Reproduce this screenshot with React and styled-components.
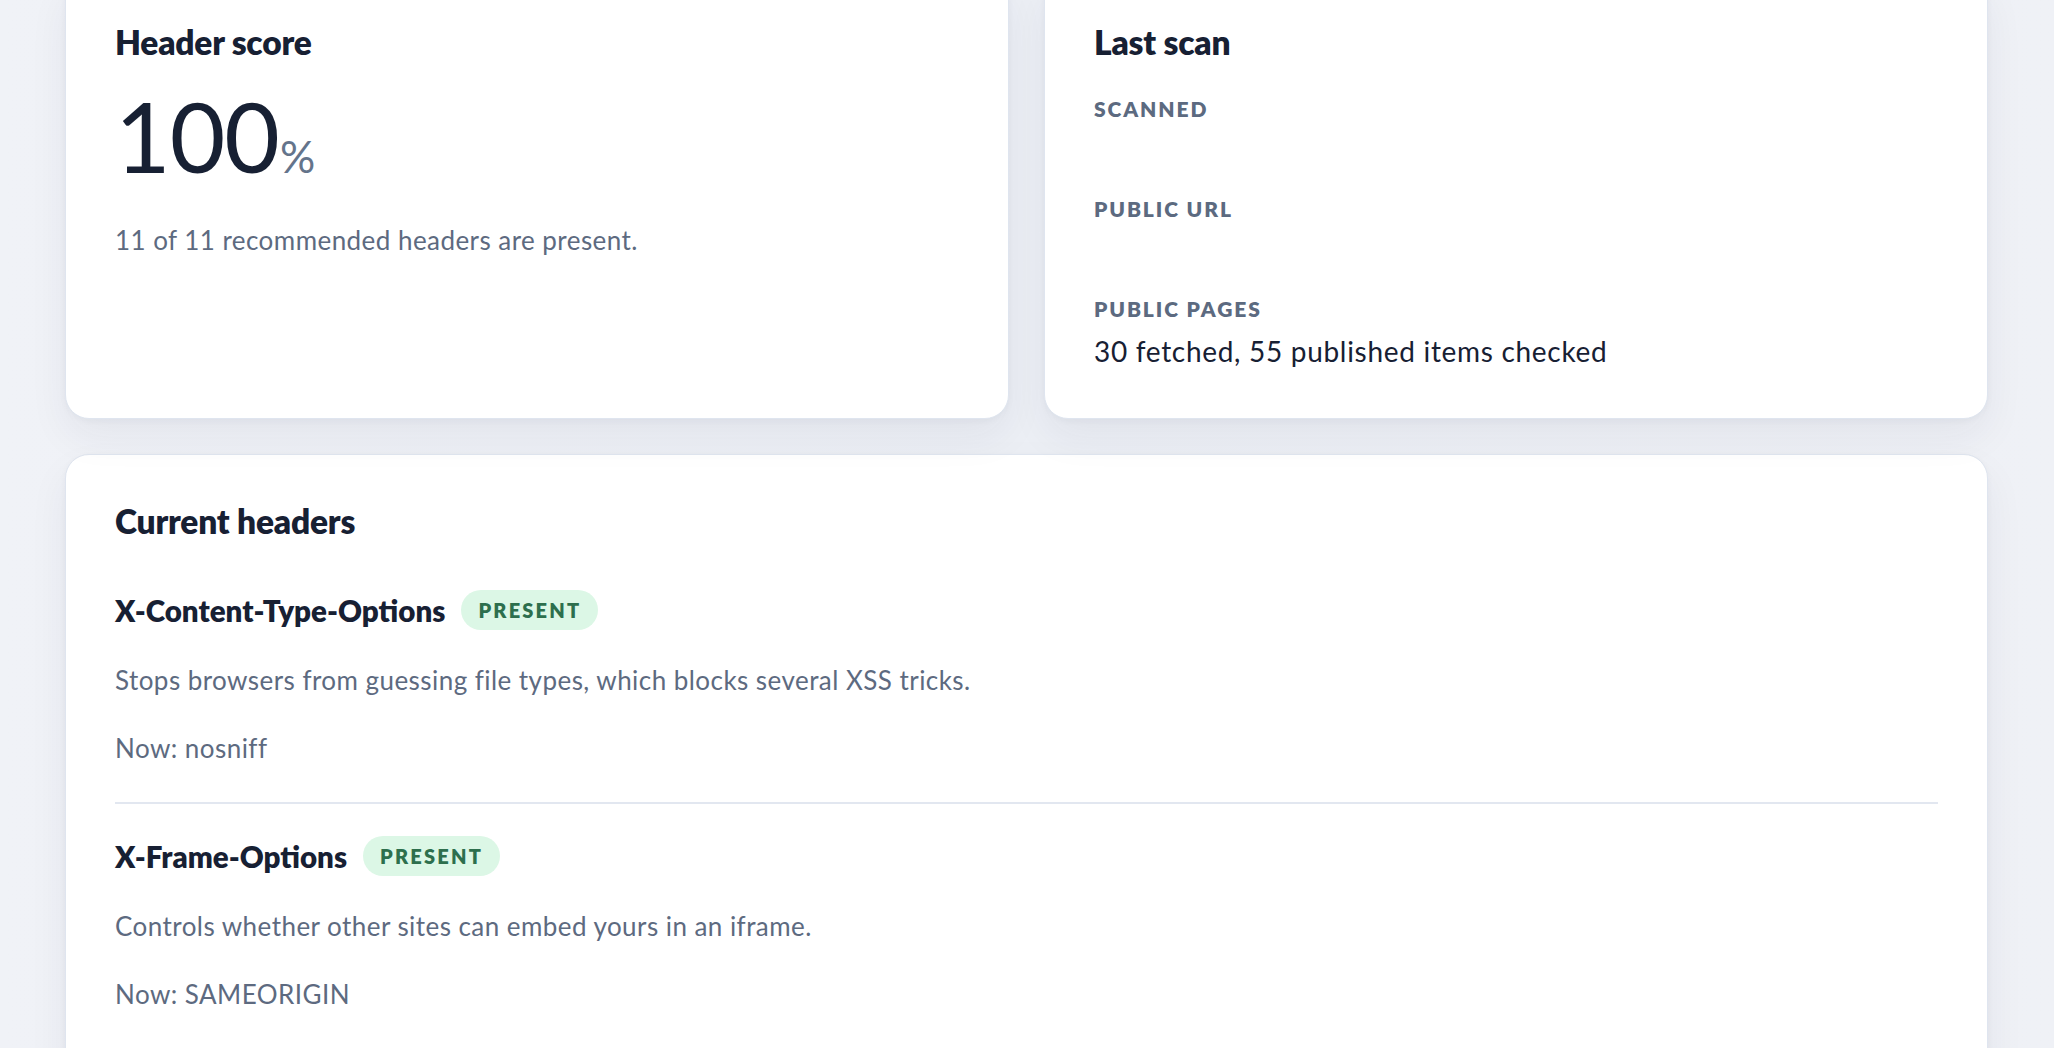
import React from 'react';
import styled, { createGlobalStyle } from 'styled-components';

const GlobalStyle = createGlobalStyle`
  html, body {
    margin: 0;
    padding: 0;
    background: #eef0f5;
    font-family: Lato, "Noto Sans", "Liberation Sans", sans-serif;
    color: #172033;
    overflow: hidden;
  }
`;

// Page is scrolled a little, so the top cards start above the fold
const Page = styled.main`
  padding: 0 66px 0 65px;
  margin-top: -25px;
  background: linear-gradient(90deg, #f0f2f7 0%, #eceff5 50%, #eff1f6 100%);
  min-height: 1100px;
`;

const TopGrid = styled.div`
  display: grid;
  grid-template-columns: 1fr 1fr;
  gap: 35px;
`;

const Card = styled.section`
  background: #ffffff;
  border: 1px solid #dfe5ef;
  border-radius: 24px;
  box-shadow: 0 18px 40px rgba(30, 41, 70, 0.06), 0 2px 6px rgba(30, 41, 70, 0.04);
  padding: 49px 49px;
  margin-top: ${({ $spaced }) => ($spaced ? '35px' : '0')};
`;

const CardTitle = styled.h2`
  margin: 0;
  font-size: 33.5px;
  line-height: 34px;
  font-weight: 800;
  letter-spacing: -0.2px;
  color: #172033;
`;

const Score = styled.div`
  display: flex;
  align-items: baseline;
  margin-top: 29px;
  line-height: 1;
`;

const ScoreValue = styled.span`
  font-size: 96px;
  font-weight: 400;
  color: #172033;
  letter-spacing: -1px;
`;

const ScoreUnit = styled.span`
  font-size: 44px;
  font-weight: 400;
  color: #64748b;
  margin-left: 1px;
`;

const Muted = styled.p`
  margin: ${({ $top }) => $top || '0'};
  font-size: 26px;
  line-height: 36px;
  letter-spacing: 0.45px;
  color: #5d6a80;
`;

const MetaList = styled.dl`
  margin: 38px 0 0;
  display: flex;
  flex-direction: column;
  gap: 28px;
`;

const MetaItem = styled.div`
  display: flex;
  flex-direction: column;
  gap: 12px;
`;

const MetaLabel = styled.dt`
  font-size: 21px;
  line-height: 24px;
  font-weight: 800;
  letter-spacing: 1.9px;
  text-transform: uppercase;
  color: #5c6a80;
`;

const MetaValue = styled.dd`
  margin: 0;
  min-height: 36px;
  font-size: 28px;
  line-height: 36px;
  letter-spacing: 0.7px;
  color: #172033;
`;

const HeaderList = styled.div`
  margin-top: 20px;
`;

const HeaderItem = styled.article`
  padding: 32px 0 36px;

  & + & {
    border-top: 2px solid #e2e7f0;
  }
`;

const HeaderRow = styled.div`
  display: flex;
  align-items: center;
  gap: 16px;
  height: 40px;
`;

const HeaderName = styled.h3`
  margin: 0;
  font-size: 29.5px;
  font-weight: 800;
  color: #172033;
`;

const Badge = styled.span`
  display: inline-flex;
  align-items: center;
  height: 40px;
  padding: 0 17px;
  border-radius: 999px;
  background: #dcf7e6;
  color: #2d6f4d;
  font-size: 20px;
  font-weight: 800;
  letter-spacing: 2.2px;
`;

const headers = [
  {
    name: 'X-Content-Type-Options',
    desc: 'Stops browsers from guessing file types, which blocks several XSS tricks.',
    now: 'nosniff',
  },
  {
    name: 'X-Frame-Options',
    desc: 'Controls whether other sites can embed yours in an iframe.',
    now: 'SAMEORIGIN',
  },
];

export default function App() {
  return (
    <>
      <GlobalStyle />
      <Page>
        <TopGrid>
          <Card>
            <CardTitle>Header score</CardTitle>
            <Score>
              <ScoreValue>100</ScoreValue>
              <ScoreUnit>%</ScoreUnit>
            </Score>
            <Muted $top="38px 0 0">11 of 11 recommended headers are present.</Muted>
          </Card>
          <Card>
            <CardTitle>Last scan</CardTitle>
            <MetaList>
              <MetaItem>
                <MetaLabel>Scanned</MetaLabel>
                <MetaValue />
              </MetaItem>
              <MetaItem>
                <MetaLabel>Public URL</MetaLabel>
                <MetaValue />
              </MetaItem>
              <MetaItem>
                <MetaLabel>Public pages</MetaLabel>
                <MetaValue>30 fetched, 55 published items checked</MetaValue>
              </MetaItem>
            </MetaList>
          </Card>
        </TopGrid>

        <Card $spaced>
          <CardTitle>Current headers</CardTitle>
          <HeaderList>
            {headers.map((h) => (
              <HeaderItem key={h.name}>
                <HeaderRow>
                  <HeaderName>{h.name}</HeaderName>
                  <Badge>PRESENT</Badge>
                </HeaderRow>
                <Muted $top="32px 0 0">{h.desc}</Muted>
                <Muted $top="32px 0 0">Now: {h.now}</Muted>
              </HeaderItem>
            ))}
          </HeaderList>
        </Card>
      </Page>
    </>
  );
}
